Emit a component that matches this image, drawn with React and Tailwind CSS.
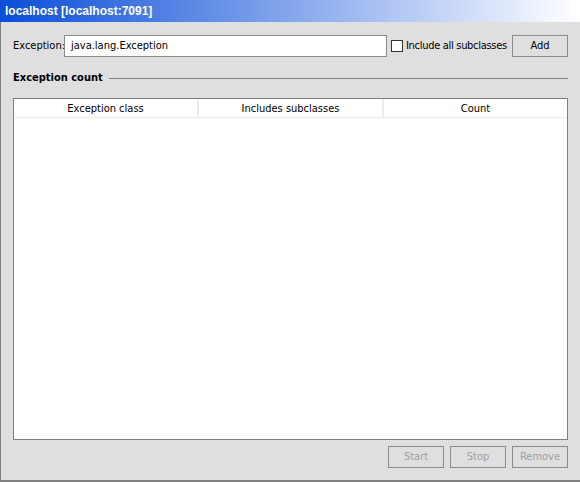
export default function App() {
  const f = { fontFamily: '"DejaVu Sans Condensed", "Liberation Sans", Arial, sans-serif' };
  return (
    <div className="w-[580px] h-[482px] flex flex-col bg-[#dfdfdf] text-[11px] text-black whitespace-nowrap" style={f}>
      <div className="h-[22px] shrink-0 flex items-center pl-[5px] bg-[linear-gradient(to_right,#0a4ed8,#ffffff)]">
        <span className="text-white font-bold text-[12px] leading-none" style={{ fontFamily: '"Liberation Sans", Arial, sans-serif' }}>localhost [localhost:7091]</span>
      </div>
      <div className="flex-1 flex flex-col border-l border-b-2 border-[#808080] pl-[12px] pr-[12px] pt-[13px]">
        <div className="flex items-center h-[22px]">
          <span className="w-[51px] shrink-0 pt-px">Exception:</span>
          <div className="w-[323px] h-[22px] shrink-0 bg-white border border-[#8a8a8a] flex items-center px-[6px] pt-px">java.lang.Exception</div>
          <div className="ml-[4px] w-[12px] h-[12px] shrink-0 border border-[#333] bg-white"></div>
          <span className="ml-[3px] tracking-[-0.3px] pt-px">Include all subclasses</span>
          <div className="ml-auto w-[56px] h-[22px] shrink-0 border border-[#8a8a8a] flex items-center justify-center pt-px">Add</div>
        </div>
        <div className="flex items-center mt-[14px] h-[14px]">
          <span className="font-bold pt-px">Exception count</span>
          <div className="flex-1 ml-[6px] h-px bg-[#808080]"></div>
        </div>
        <div className="mt-[13px] h-[342px] bg-white border border-[#808080] flex flex-col">
          <div className="flex h-[19px] border-b border-[#ececec]">
            <div className="w-[185px] flex items-center justify-center border-r-2 border-[#ececec] pt-[2px]">Exception class</div>
            <div className="w-[185px] flex items-center justify-center border-r-2 border-[#ececec] pt-[2px]">Includes subclasses</div>
            <div className="flex-1 flex items-center justify-center pt-[2px]">Count</div>
          </div>
        </div>
        <div className="flex justify-end gap-[6px] mt-[6px] text-[#a0a0a0]">
          <div className="w-[56px] h-[22px] border border-[#8a8a8a] flex items-center justify-center pt-px">Start</div>
          <div className="w-[56px] h-[22px] border border-[#8a8a8a] flex items-center justify-center pt-px">Stop</div>
          <div className="w-[56px] h-[22px] border border-[#8a8a8a] flex items-center justify-center pt-px">Remove</div>
        </div>
      </div>
    </div>
  );
}
